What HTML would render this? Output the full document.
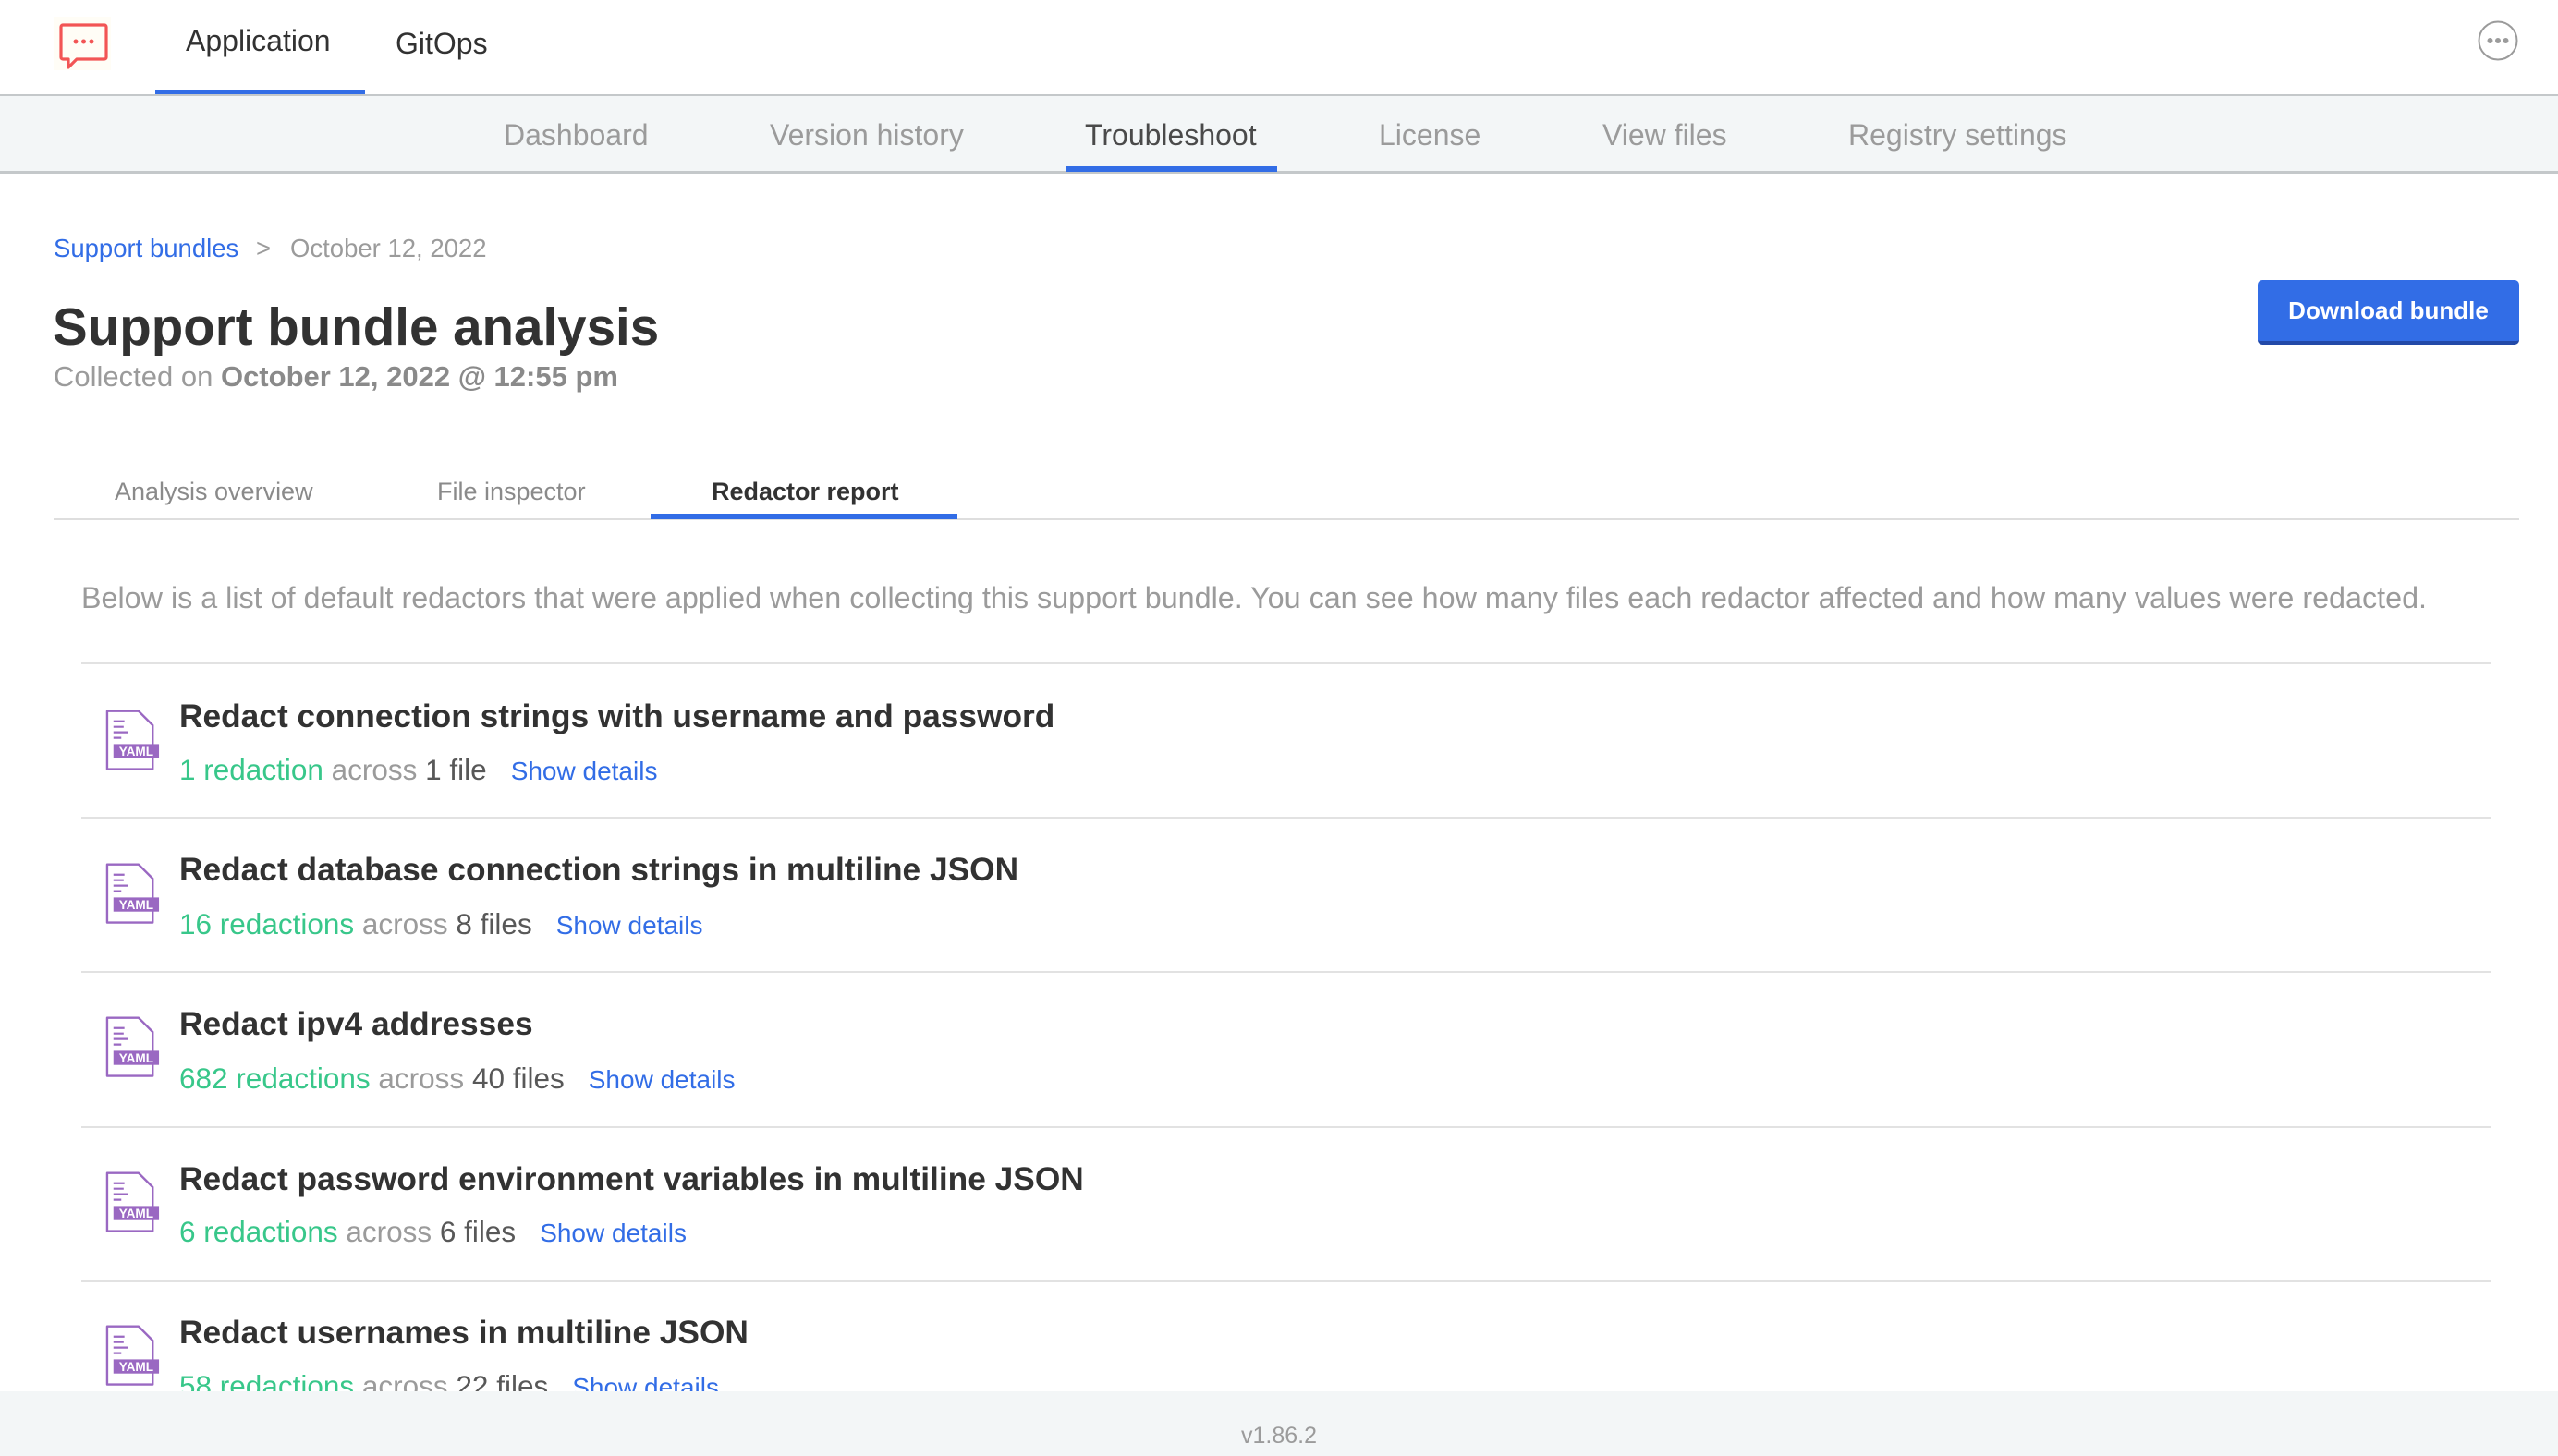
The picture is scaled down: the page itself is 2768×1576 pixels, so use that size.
<!DOCTYPE html>
<html><head><meta charset="utf-8"><style>
*{margin:0;padding:0;box-sizing:border-box}
body{width:2768px;height:1576px;overflow:hidden;background:#fff;font-family:"Liberation Sans",Arial,sans-serif;position:relative;color:#323232}
.a{position:absolute;white-space:nowrap}
.nav{font-size:32px;color:#9b9b9b;top:128px}
.row .t{font-size:35.3px;font-weight:bold;color:#323232}
.row .s{font-size:31.5px;color:#9b9b9b}
.g{color:#38c78a}.d{color:#585858}.b{color:#326de6;font-size:28px;margin-left:26px}
.hr{position:absolute;left:88px;width:2608px;height:2px;background:#e2e2e2}
</style></head><body>
<div class="a" style="left:58px;top:18px;width:62px;height:58px;background:#fffdf6"></div>
<svg class="a" style="left:64px;top:24px" width="54" height="52" viewBox="0 0 54 52"><path d="M4 3H49a2 2 0 0 1 2 2V38a2 2 0 0 1-2 2H19L10 49V40H4a2 2 0 0 1-2-2V5a2 2 0 0 1 2-2Z" fill="none" stroke="#f25555" stroke-width="3.2" stroke-linejoin="round"/><circle cx="18" cy="21" r="2.5" fill="#f25555"/><circle cx="26.5" cy="21" r="2.5" fill="#f25555"/><circle cx="35" cy="21" r="2.5" fill="#f25555"/></svg>
<div class="a" style="left:201px;top:26px;font-size:32px;color:#323232">Application</div>
<div class="a" style="left:168px;top:97px;width:227px;height:5px;background:#326de6"></div>
<div class="a" style="left:428px;top:29px;font-size:32px;color:#323232">GitOps</div>
<svg class="a" style="left:2680px;top:21px" width="46" height="46" viewBox="0 0 46 46"><circle cx="23" cy="23" r="20.5" fill="none" stroke="#9b9b9b" stroke-width="2"/><circle cx="14.5" cy="23" r="3" fill="#9b9b9b"/><circle cx="23" cy="23" r="3" fill="#9b9b9b"/><circle cx="31.5" cy="23" r="3" fill="#9b9b9b"/></svg>
<div class="a" style="left:0;top:102px;width:2768px;height:86px;background:#f3f6f7;border-top:2px solid #c4c8ca;border-bottom:3px solid #c4c8ca"></div>
<div class="a nav" style="left:545px">Dashboard</div>
<div class="a nav" style="left:833px">Version history</div>
<div class="a nav" style="left:1174px;color:#4a4a4a">Troubleshoot</div>
<div class="a" style="left:1153px;top:180px;width:229px;height:6px;background:#326de6"></div>
<div class="a nav" style="left:1492px">License</div>
<div class="a nav" style="left:1734px">View files</div>
<div class="a nav" style="left:2000px">Registry settings</div>
<div class="a" style="left:58px;top:253px;font-size:27.5px;color:#326de6">Support bundles</div>
<div class="a" style="left:277px;top:253px;font-size:27.5px;color:#9b9b9b">&gt;</div>
<div class="a" style="left:314px;top:253px;font-size:27.5px;color:#9b9b9b">October 12, 2022</div>
<div class="a" style="left:57px;top:321px;font-size:56.5px;font-weight:bold;color:#323232">Support bundle analysis</div>
<div class="a" style="left:58px;top:390px;font-size:31px;color:#9b9b9b">Collected on <b style="color:#8a8a8a">October 12, 2022 @ 12:55 pm</b></div>
<div class="a" style="left:2443px;top:303px;width:283px;height:70px;background:#326de6;border-radius:5px;border-bottom:4px solid #2249a8;color:#fff;font-weight:bold;font-size:26px;text-align:center;line-height:66px">Download bundle</div>
<div class="a" style="left:124px;top:517px;font-size:27px;color:#8a8a8a">Analysis overview</div>
<div class="a" style="left:473px;top:517px;font-size:27px;color:#8a8a8a">File inspector</div>
<div class="a" style="left:770px;top:517px;font-size:27px;font-weight:bold;color:#323232">Redactor report</div>
<div class="a" style="left:58px;top:561px;width:2668px;height:2px;background:#dedede"></div>
<div class="a" style="left:704px;top:556px;width:332px;height:6px;background:#326de6"></div>
<div class="a" style="left:88px;top:629px;font-size:32.3px;color:#9b9b9b">Below is a list of default redactors that were applied when collecting this support bundle. You can see how many files each redactor affected and how many values were redacted.</div>
<div class="hr" style="top:717px"></div>
<div class="hr" style="top:884px"></div>
<div class="hr" style="top:1051px"></div>
<div class="hr" style="top:1219px"></div>
<div class="hr" style="top:1386px"></div>
<svg width="0" height="0" style="position:absolute"><defs><g id="ic"><path d="M1 1H21L30 10V38H1Z" fill="#fff" stroke="#9a68c2" stroke-width="1.4" stroke-linejoin="round"/><path d="M21 1L30 10" fill="none" stroke="#9a68c2" stroke-width="1.2"/><path d="M5 7.5H12M5 11H11.5M5 14.5H14.5M5 18H10" stroke="#9a68c2" stroke-width="1.3"/><rect x="5" y="22" width="29" height="9" fill="#9a68c2"/><text x="19.5" y="29.5" font-family="Liberation Sans,sans-serif" font-size="8" font-weight="bold" fill="#fff" text-anchor="middle">YAML</text></g></defs></svg>
<div class="row">
<svg class="a" style="left:114px;top:768px" width="60" height="68" viewBox="0 0 35 40"><use href="#ic"/></svg>
<div class="a t" style="left:194px;top:756px">Redact connection strings with username and password</div>
<div class="a s" style="left:194px;top:815px"><span class="g">1 redaction</span> across <span class="d">1 file</span><span class="b">Show details</span></div>
</div>
<div class="row">
<svg class="a" style="left:114px;top:934px" width="60" height="68" viewBox="0 0 35 40"><use href="#ic"/></svg>
<div class="a t" style="left:194px;top:922px">Redact database connection strings in multiline JSON</div>
<div class="a s" style="left:194px;top:982px"><span class="g">16 redactions</span> across <span class="d">8 files</span><span class="b">Show details</span></div>
</div>
<div class="row">
<svg class="a" style="left:114px;top:1100px" width="60" height="68" viewBox="0 0 35 40"><use href="#ic"/></svg>
<div class="a t" style="left:194px;top:1089px">Redact ipv4 addresses</div>
<div class="a s" style="left:194px;top:1149px"><span class="g">682 redactions</span> across <span class="d">40 files</span><span class="b">Show details</span></div>
</div>
<div class="row">
<svg class="a" style="left:114px;top:1268px" width="60" height="68" viewBox="0 0 35 40"><use href="#ic"/></svg>
<div class="a t" style="left:194px;top:1257px">Redact password environment variables in multiline JSON</div>
<div class="a s" style="left:194px;top:1315px"><span class="g">6 redactions</span> across <span class="d">6 files</span><span class="b">Show details</span></div>
</div>
<div class="row">
<svg class="a" style="left:114px;top:1434px" width="60" height="68" viewBox="0 0 35 40"><use href="#ic"/></svg>
<div class="a t" style="left:194px;top:1423px">Redact usernames in multiline JSON</div>
<div class="a s" style="left:194px;top:1482px"><span class="g">58 redactions</span> across <span class="d">22 files</span><span class="b">Show details</span></div>
</div>
<div class="a" style="left:0;top:1506px;width:2768px;height:70px;background:#f3f6f7"></div>
<div class="a" style="left:0;top:1540px;width:2768px;text-align:center;font-size:25px;color:#9b9b9b">v1.86.2</div>
</body></html>
